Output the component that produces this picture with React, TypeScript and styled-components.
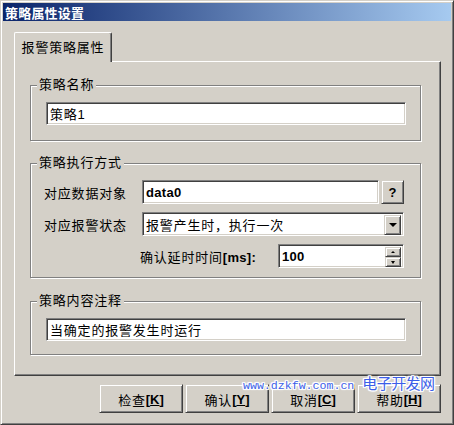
import React from 'react';
import styled, { createGlobalStyle } from 'styled-components';

const FACE = '#d4d0c8';
const SHADOW = '#808080';
const DARK = '#404040';

const GlobalStyle = createGlobalStyle`
  html, body {
    margin: 0;
    padding: 0;
    background: ${FACE};
  }
  body {
    font-family: "Liberation Sans", "Noto Sans CJK SC", sans-serif;
    font-size: 13px;
    color: #000;
  }
`;

const Window = styled.div`
  position: relative;
  box-sizing: border-box;
  width: 454px;
  height: 425px;
  background: ${FACE};
  border: 1px solid;
  border-color: ${FACE} ${DARK} ${DARK} ${FACE};
  box-shadow: inset 1px 1px 0 #fff, inset -1px -1px 0 ${SHADOW};
  padding: 2px;
  display: flex;
  flex-direction: column;
`;

const TitleBar = styled.div`
  height: 18px;
  display: flex;
  align-items: center;
  padding-left: 2px;
  background: linear-gradient(to right, #0a246a, #a6caf0);
  color: #fff;
  font-weight: bold;
  font-size: 13px;
  letter-spacing: 0.2px;
`;

const Body = styled.div`
  padding: 11px 10px 0 11px;
  display: flex;
  flex-direction: column;
`;

const TabStrip = styled.div`
  display: flex;
  position: relative;
  z-index: 1;
`;

const Tab = styled.div`
  box-sizing: border-box;
  width: 98px;
  height: 30px;
  margin-bottom: -1px;
  background: ${FACE};
  border-top: 1px solid #fff;
  border-left: 1px solid #fff;
  border-right: 1px solid ${DARK};
  border-top-left-radius: 2px;
  border-top-right-radius: 2px;
  box-shadow: inset -1px 0 0 ${SHADOW};
  display: flex;
  align-items: center;
  justify-content: center;
  letter-spacing: 0.8px;
  padding-bottom: 2px;
`;

const Panel = styled.div`
  box-sizing: border-box;
  height: 315px;
  border: 1px solid;
  border-color: #fff ${DARK} ${DARK} #fff;
  box-shadow: inset -1px -1px 0 ${SHADOW};
  padding: 23px 0 0 15px;
  display: flex;
  flex-direction: column;
`;

const Group = styled.div<{ $h: number; $gap?: number }>`
  position: relative;
  box-sizing: border-box;
  width: 391px;
  height: ${p => p.$h}px;
  margin-top: ${p => p.$gap ?? 0}px;
  border: 1px solid ${SHADOW};
  box-shadow: 1px 1px 0 #fff, inset 1px 1px 0 #fff;
  padding: 16px 0 0 15px;
  display: flex;
  flex-direction: column;
  gap: 8px;
`;

const Caption = styled.span`
  position: absolute;
  top: -9px;
  left: 6px;
  padding: 0 2px;
  line-height: 16px;
  background: ${FACE};
  letter-spacing: 0.8px;
`;

const Sunken = styled.div<{ $w: number; $h?: number }>`
  position: relative;
  box-sizing: border-box;
  width: ${p => p.$w}px;
  height: ${p => p.$h ?? 24}px;
  background: #fff;
  border: 1px solid;
  border-color: ${SHADOW} #fff #fff ${SHADOW};
  box-shadow: inset 1px 1px 0 ${DARK}, inset -1px -1px 0 ${FACE};
  padding: 0 3px;
  display: flex;
  align-items: center;
  letter-spacing: 0.8px;
  white-space: nowrap;
`;

const Bold = styled.span`
  font-weight: bold;
  letter-spacing: 0.3px;
`;

const Raised = styled.div<{ $w: number; $h: number }>`
  box-sizing: border-box;
  width: ${p => p.$w}px;
  height: ${p => p.$h}px;
  background: ${FACE};
  border: 1px solid;
  border-color: ${FACE} ${DARK} ${DARK} ${FACE};
  box-shadow: inset 1px 1px 0 #fff, inset -1px -1px 0 ${SHADOW};
  display: flex;
  align-items: center;
  justify-content: center;
`;

const Row = styled.div<{ $indent?: number }>`
  display: flex;
  align-items: center;
  width: 360px;
  padding-left: ${p => p.$indent ?? 0}px;
  margin-left: -2px;
  box-sizing: border-box;
`;

const Label = styled.span<{ $w?: number }>`
  width: ${p => (p.$w ? `${p.$w}px` : 'auto')};
  flex: ${p => (p.$w ? 'none' : 1)};
  letter-spacing: 0.8px;
  white-space: nowrap;
`;

const DropBtn = styled(Raised)`
  position: absolute;
  right: 2px;
  top: 2px;
`;

const SpinStack = styled.div`
  position: absolute;
  right: 2px;
  top: 2px;
  display: flex;
  flex-direction: column;
`;

const Tri = styled.span<{ $up?: boolean; $size: number }>`
  width: 0;
  height: 0;
  border-left: ${p => p.$size}px solid transparent;
  border-right: ${p => p.$size}px solid transparent;
  ${p =>
    p.$up
      ? `border-bottom: ${Math.ceil(p.$size / 1.5)}px solid #000;`
      : `border-top: ${Math.ceil(p.$size / 1.5) + 1}px solid #000;`}
`;

const ButtonRow = styled.div`
  display: flex;
  justify-content: flex-end;
  gap: 2px;
  margin-top: 8px;
`;

const Button = styled(Raised)`
  letter-spacing: 0.8px;
  padding-top: 1px;
`;

const Key = styled.span`
  font-weight: bold;
  letter-spacing: 0;
  u {
    text-decoration-thickness: 1px;
    text-underline-offset: 1px;
  }
`;

const Watermark = styled.div`
  position: absolute;
  left: 242px;
  top: 371px;
  display: flex;
  align-items: baseline;
  gap: 8px;
  color: #3c5ee8;
  text-shadow: 1px 0 0 #fff, -1px 0 0 #fff, 0 1px 0 #fff, 0 -1px 0 #fff,
    1px 1px 0 #fff, -1px -1px 0 #fff, 1px -1px 0 #fff, -1px 1px 0 #fff,
    0 0 3px #fff, 0 0 3px #fff;
`;

const WmUrl = styled.span`
  font-family: "Liberation Mono", monospace;
  font-size: 11.6px;
`;

const WmName = styled.span`
  font-family: "Noto Sans CJK SC", sans-serif;
  font-size: 15px;
  letter-spacing: -0.6px;
`;

const buttons: [string, string][] = [
  ['检查', 'K'],
  ['确认', 'Y'],
  ['取消', 'C'],
  ['帮助', 'H'],
];

export default function App() {
  return (
    <>
      <GlobalStyle />
      <Window>
        <TitleBar>策略属性设置</TitleBar>
        <Body>
          <TabStrip>
            <Tab>报警策略属性</Tab>
          </TabStrip>
          <Panel>
            <Group $h={56}>
              <Caption>策略名称</Caption>
              <Sunken $w={360} $h={23}>策略1</Sunken>
            </Group>

            <Group $h={115} $gap={22}>
              <Caption>策略执行方式</Caption>
              <Row>
                <Label $w={98}>对应数据对象</Label>
                <Sunken $w={239}>
                  <Bold>data0</Bold>
                </Sunken>
                <Raised $w={23} $h={24} style={{ marginLeft: 2 }}>
                  <Bold>?</Bold>
                </Raised>
              </Row>
              <Row>
                <Label $w={98}>对应报警状态</Label>
                <Sunken $w={262}>
                  报警产生时，执行一次
                  <DropBtn $w={17} $h={20}>
                    <Tri $size={4} />
                  </DropBtn>
                </Sunken>
              </Row>
              <Row $indent={96}>
                <Label>
                  确认延时时间<Bold>[ms]:</Bold>
                </Label>
                <Sunken $w={126}>
                  <Bold>100</Bold>
                  <SpinStack>
                    <Raised $w={16} $h={10}>
                      <Tri $up $size={2} />
                    </Raised>
                    <Raised $w={16} $h={10}>
                      <Tri $size={2} />
                    </Raised>
                  </SpinStack>
                </Sunken>
              </Row>
            </Group>

            <Group $h={54} $gap={23}>
              <Caption>策略内容注释</Caption>
              <Sunken $w={360} $h={23}>当确定的报警发生时运行</Sunken>
            </Group>
          </Panel>

          <ButtonRow>
            {buttons.map(([text, key]) => (
              <Button key={key} $w={84} $h={29}>
                {text}
                <Key>
                  [<u>{key}</u>]
                </Key>
              </Button>
            ))}
          </ButtonRow>
        </Body>
        <Watermark>
          <WmUrl>www.dzkfw.com.cn</WmUrl>
          <WmName>电子开发网</WmName>
        </Watermark>
      </Window>
    </>
  );
}
